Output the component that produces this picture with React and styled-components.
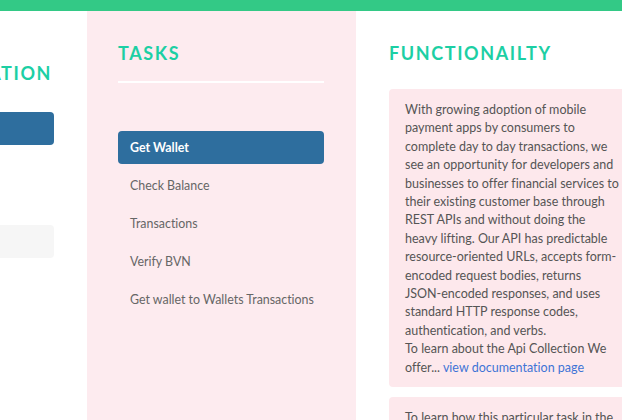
import React from 'react';
import styled, { createGlobalStyle } from 'styled-components';

const GlobalStyle = createGlobalStyle`
  html, body {
    margin: 0;
    padding: 0;
    overflow: hidden;
    background: #ffffff;
  }
  body {
    font-family: "Lato", "Open Sans", sans-serif;
    font-variant-ligatures: none;
    color: #555;
  }
`;

const tasks = [
  'Get Wallet',
  'Check Balance',
  'Transactions',
  'Verify BVN',
  'Get wallet to Wallets Transactions',
];

function App() {
  return (
    <>
      <GlobalStyle />
      <StTopBar />
      <StColumns>
        <StSideColumn>
          <StSideTitle>INTEGRATION</StSideTitle>
          <StSideButton />
          <StSideInput />
        </StSideColumn>

        <StTaskColumn>
          <StTitle>TASKS</StTitle>
          <StDivider />
          <StTaskList>
            {tasks.map((task, i) => (
              <StTask key={task} $active={i === 0}>{task}</StTask>
            ))}
          </StTaskList>
        </StTaskColumn>

        <StInfoColumn>
          <StTitle>FUNCTIONAILTY</StTitle>
          <StInfoBox $top={18}>
            With growing adoption of mobile payment apps by consumers to complete day to day
            transactions, we see an opportunity for developers and businesses to offer financial
            services to their existing customer base through REST APIs and without doing the heavy
            lifting. Our API has predictable resource-oriented URLs, accepts form-encoded request
            bodies, returns JSON-encoded responses, and uses standard HTTP response codes,
            authentication, and verbs.
            <br />
            To learn about the Api Collection We offer... <StLink href="#">view documentation page</StLink>
          </StInfoBox>
          <StInfoBox $top={10}>
            To learn how this particular task in the collection works, read the guide below.
          </StInfoBox>
        </StInfoColumn>
      </StColumns>
    </>
  );
}

export default App;

const StTopBar = styled.div`
  height: 11px;
  background-color: #33c986;
`;

const StColumns = styled.div`
  display: flex;
  flex-direction: row;
  align-items: stretch;
  min-height: 409px;
  margin-left: -183px;
`;

const StSideColumn = styled.div`
  flex-shrink: 0;
  display: flex;
  flex-direction: column;
  width: 270px;
  padding: 44px 33px 0 32px;
  box-sizing: border-box;
`;

const StSideTitle = styled.h2`
  margin: 0 2px 21px 0;
  font-family: "Lato", sans-serif;
  font-size: 18px;
  font-weight: 700;
  letter-spacing: 1.6px;
  color: #1ccfa4;
  text-align: right;
  line-height: 36px;
`;

const StSideButton = styled.div`
  height: 33px;
  border-radius: 4px;
  background-color: #2e6e9e;
`;

const StSideInput = styled.div`
  height: 33px;
  margin-top: 80px;
  border-radius: 4px;
  background-color: #f6f6f6;
`;

const StTaskColumn = styled.div`
  flex-shrink: 0;
  display: flex;
  flex-direction: column;
  width: 269px;
  padding: 24px 32px 0 31px;
  box-sizing: border-box;
  background-color: #fdebef;
`;

const StTitle = styled.h2`
  margin: 0;
  font-family: "Lato", sans-serif;
  font-size: 18px;
  font-weight: 700;
  letter-spacing: 1.6px;
  color: #1ccfa4;
  line-height: 36px;
`;

const StDivider = styled.div`
  height: 2px;
  margin-top: 10px;
  background-color: #ffffff;
`;

const StTaskList = styled.div`
  display: flex;
  flex-direction: column;
  gap: 5px;
  margin-top: 48px;
`;

const StTask = styled.div`
  height: 33px;
  display: flex;
  align-items: center;
  padding: 0 12px;
  border-radius: 4px;
  font-size: 12.4px;
  white-space: nowrap;
  font-weight: ${(p) => (p.$active ? 700 : 400)};
  color: ${(p) => (p.$active ? '#ffffff' : '#666')};
  background-color: ${(p) => (p.$active ? '#2e6e9e' : 'transparent')};
`;

const StInfoColumn = styled.div`
  flex-shrink: 0;
  display: flex;
  flex-direction: column;
  width: 300px;
  padding: 24px 0 0 33px;
  box-sizing: border-box;
`;

const StInfoBox = styled.div`
  width: 246px;
  margin-top: ${(p) => p.$top}px;
  padding: 12px 16px 10px 16px;
  box-sizing: border-box;
  border-radius: 4px;
  background-color: #fde8ec;
  font-size: 12.5px;
  line-height: 18.4px;
  color: #555;
`;

const StLink = styled.a`
  color: #3f74d6;
  text-decoration: none;
`;
